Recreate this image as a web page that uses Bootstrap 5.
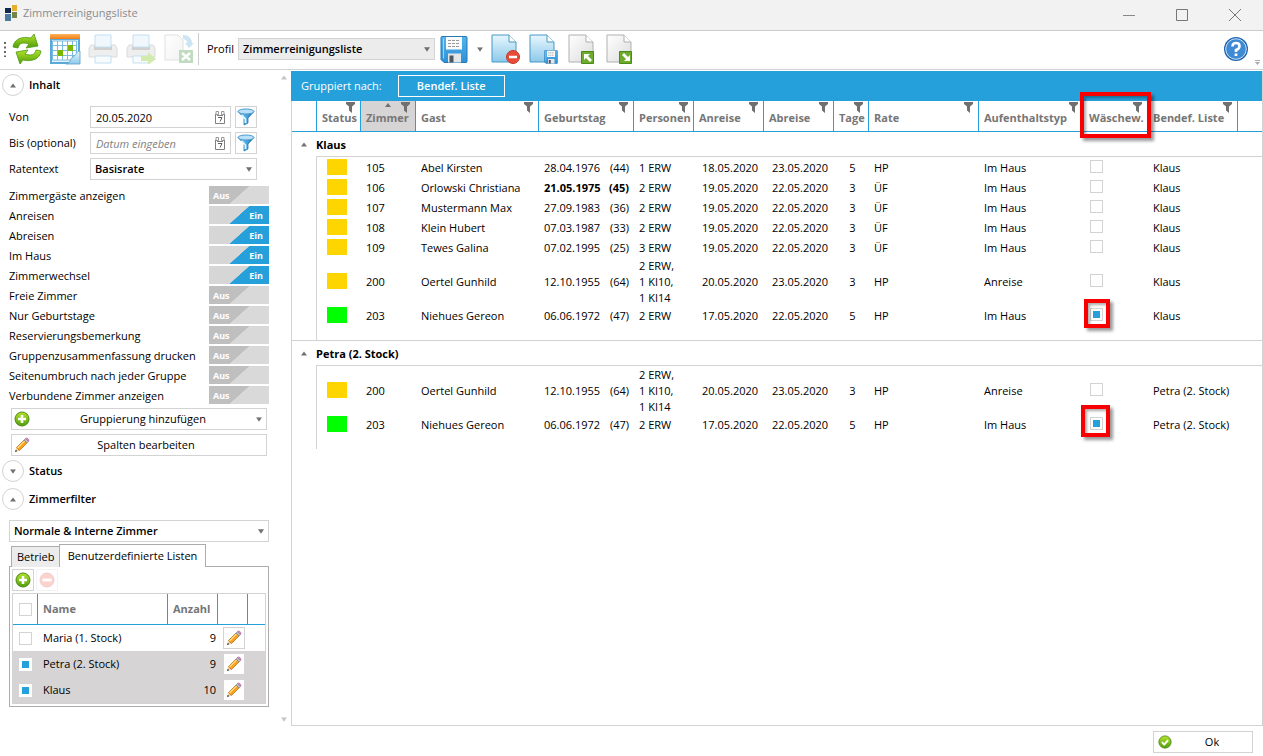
<!DOCTYPE html>
<html lang="de">
<head>
<meta charset="utf-8">
<meta name="viewport" content="width=device-width, initial-scale=1">
<title>Zimmerreinigungsliste</title>
<link href="https://cdn.jsdelivr.net/npm/bootstrap@5.3.0/dist/css/bootstrap.min.css" rel="stylesheet">
<style>
:root{--accent:#26a0da;--line:#d3d3d3;--grey:#767676}
body{font:11px/16px "Open Sans","Noto Sans",sans-serif;color:#000;background:#fff}
button,input,select{font:inherit;color:inherit}
svg{display:block;flex:none}
.semi{font-weight:600}
.title-strip{height:31px;background:#f2f2f2;border-bottom:1px solid #ccc;color:#8c8c8c;padding-left:4px;gap:5px}
.title-strip .win-btn{width:48px;height:28px;border:0;background:none;padding:0}
.title-strip{padding-right:4px}
.tool-strip{height:39px;border-bottom:1px solid var(--line);padding:0 8px 2px 4px;position:relative}
.tool-strip .tool{border:0;background:none;padding:0;width:38px;height:36px;display:flex;align-items:center;justify-content:center}
.tool-strip .tool.slim{width:14px}
.tool-strip .overflow-mark{position:absolute;right:3px;bottom:3px}
.tool.faded{opacity:.35}
.tool-sep{width:1px;height:32px;background:#ccc}
.pick{appearance:none;height:22px;border:1px solid var(--line);border-radius:0;padding:0 20px 0 4px;font-weight:600;background:#fff url("data:image/svg+xml,%3Csvg xmlns='http://www.w3.org/2000/svg' width='6' height='5' viewBox='0 0 7 5'%3E%3Cpath d='M0 0h7L3.500 5z' fill='%23707070'/%3E%3C/svg%3E") no-repeat right 4px center}
.pick.profile{width:197px;background-color:#ececec}
main{padding-top:1px}
.side{width:291px;flex:none;padding:3px 22px 0 9px}
.exp{border:0;background:none;padding:0;height:22px;gap:5px;margin-left:-7px}
.exp .ring{width:22px;height:22px;border:1px solid var(--line);border-radius:50%;display:flex;align-items:center;justify-content:center}
.fields{padding-top:10px}
.form-line{height:22px;margin-bottom:4px;width:248px}
.form-line label{width:81px;flex:none}
.date-box{width:141px;height:22px;border:1px solid var(--line)}
.date-box input{border:0;outline:0;background:none;padding:0 5px;width:118px;height:20px}
.date-box input::placeholder{color:#808080;font-style:italic;opacity:1}
.flat{border:1px solid var(--line);background:#fff;border-radius:0;padding:0;height:22px;display:flex;align-items:center}
.flat.sq{width:22px;justify-content:center}
.opts{padding:2px 0}
.opt{height:20px;white-space:nowrap}
.opt .sw{position:relative;width:60px;height:18px;flex:none;margin-top:-3px}
.opt input{appearance:none;position:absolute;inset:0;margin:0;width:60px;height:18px;background:linear-gradient(138deg,#bfbfbf 50%,#d9d9d9 51%)}
.opt input:checked{background:linear-gradient(138deg,#d6d6d6 50%,var(--accent) 51%)}
.opt b{position:absolute;left:4px;top:2px;font-size:9px;color:#fff}
.opt input:checked + b{left:auto;right:6px}
.cmd{width:256px;margin:0 0 4px 2px;padding:0 4px 0 2px}
.cmd span{flex:1;text-align:center}
.tabs{margin:2px 0 0 2px;height:23px}
.tabs button{border:1px solid #acacac;border-bottom:0;background:#ececec;padding:0 5px;height:21px;border-radius:0;white-space:nowrap;width:49px;text-align:center}
.tabs button.on{background:#fff;width:147px;height:23px;margin-left:-1px;position:relative}
.tab-body{border:1px solid #acacac;width:260px;margin-top:-1px;padding:2px}
.tab-tools{gap:2px}
.filters{padding-top:6px}
.filters .pick{margin-top:10px}
.mini{border:1px solid var(--line);table-layout:fixed;width:100%;border-collapse:separate;border-spacing:0;margin-top:2px}
.mini th{height:31px;border-bottom:1px solid var(--accent);border-right:1px solid var(--accent);color:var(--grey);padding:0 5px}
.mini th:last-child{border-right:0}
.mini td{height:26px;padding:0 5px}
.mini td:nth-child(3){text-align:right;padding-right:2px}
.mini tr.sel td{background:#d6d4d5}
.mini .sel .flat{border-color:#fff;height:20px;width:20px;margin-left:1px}
.tick{appearance:none;display:block;width:13px;height:13px;margin:0;border:1px solid var(--line);background:#fff}
.tick:checked{background:linear-gradient(var(--accent),var(--accent)) center/7px 7px no-repeat #fff}
.mini .tick{margin-left:1px}
.mini .sel .tick{border-color:#fff}
.work{border:1px solid var(--line);border-top:0;margin-bottom:0;min-width:0}
.group-strip{background:var(--accent);color:#fff;height:30px;padding-left:10px;gap:16px;margin-left:-1px}
.group-strip button{border:1px solid #fff;background:none;color:#fff;width:107px;height:22px;padding:0;font-weight:600}
.rooms{table-layout:fixed;width:100%;border-collapse:separate;border-spacing:0}
.rooms thead th{height:31px;position:relative;border-bottom:1px solid var(--accent);border-right:1px solid var(--accent);color:var(--grey);padding:3px 0 0 5px;white-space:nowrap}
.rooms thead th:last-child{border-right:0}
.rooms th.sorted{background:#d6d4d5}
.rooms th .flt{position:absolute;right:5px;top:1px}
.rooms th .up{position:absolute;left:50%;top:2px;margin-left:-3px}
.rooms td{height:20px;padding:0 5px;white-space:nowrap}
.rooms td.c{text-align:center;padding:0 0 0 2px}
.rooms td:first-child{border-right:1px solid var(--line);padding:0}
.rooms .grp th{height:24px;padding-left:9px;padding-top:2px}
.rooms .grp button{border:0;background:none;padding:0;gap:9px;font-weight:700}
.rooms .gap td{height:2px;border-top:1px solid var(--line);line-height:0}
.rooms .gap td:first-child{border-top:0}
.rooms .end td{height:14px}
.rooms .end.ruled td{height:15px;border-bottom:1px solid var(--line)}
.chip{display:block;width:20px;height:16px;background:#ffd500;margin:0 0 2px 5px}
.chip.go{background:#0f0}
.cell-tick{position:relative;width:13px;margin:0 0 3px 1px}
.mark-red{position:absolute;border:4px solid #f80000;box-shadow:3px 3px 3px #0006,inset 2px 2px 3px #0005;pointer-events:none;z-index:2}
.mark-red.head{inset:-9px -4px -7px -4px}
.mark-red.one{inset:-9px -7px -7px -6px}
.mark-red.two{inset:-12px -7px -7px -9px}
.foot{height:30px;padding:5px 10px 0 0}
.foot .flat{width:100px}
</style>
</head>
<body>
<svg width="0" height="0" class="position-absolute" aria-hidden="true">
<defs>
<linearGradient id="gG" x2="0" y2="1"><stop stop-color="#b5e32a"/><stop offset="1" stop-color="#4f9e0a"/></linearGradient>
<linearGradient id="gB" x2="0" y2="1"><stop stop-color="#e8f6fd"/><stop offset="1" stop-color="#8cc9ea"/></linearGradient>
<linearGradient id="gS" x2="0" y2="1"><stop stop-color="#53b5ec"/><stop offset="1" stop-color="#2e8fd6"/></linearGradient>
<linearGradient id="gW" x2="1" y2="1"><stop stop-color="#fff"/><stop offset="1" stop-color="#dcdcdc"/></linearGradient>
<linearGradient id="gO" x2="0" y2="1"><stop stop-color="#ffb45c"/><stop offset="1" stop-color="#f07c14"/></linearGradient>
<linearGradient id="gF" x2="1" y2="0"><stop stop-color="#8fd0f4"/><stop offset=".5" stop-color="#4aa9e0"/><stop offset="1" stop-color="#1b6fae"/></linearGradient>
<symbol id="flt" viewBox="0 0 9 11"><path d="M0 0h9v2L6 4.500V11L3 8.500v-4L0 2z" fill="#707070"/></symbol>
<symbol id="up" viewBox="0 0 6 4"><path d="M3 0l3 4H0z" fill="#707070"/></symbol>
<symbol id="dn" viewBox="0 0 7 5"><path d="M0 0h7L3.500 5z" fill="#707070"/></symbol>
<symbol id="cal" viewBox="0 0 12 13"><path d="M1.500 3v9.500h9V3M3 4.500h6" fill="none" stroke="#808080"/><path d="M2 .5h2.500v3H2zM7.500 .5H10v3H7.500z" fill="#fff" stroke="#808080" stroke-width=".8"/><path d="M4 6.500h4L6 10.500" fill="none" stroke="#606060"/></symbol>
<symbol id="fun" viewBox="0 0 18 18"><path d="M1 3.500l6 6.500v7l4-2v-5l6-6.500z" fill="url(#gF)" stroke="#2a78b0" stroke-width=".8"/><ellipse cx="9" cy="3.500" rx="8" ry="2.500" fill="#b9e0f6" stroke="#4a9cd0"/><path d="M4.500 7l4 4v4" stroke="#e2f4fd" stroke-width="1.800" fill="none"/></symbol>
<symbol id="plus" viewBox="0 0 16 16"><circle cx="8" cy="8" r="7" fill="url(#gG)" stroke="#4b8a12"/><path d="M8 4v8M4 8h8" stroke="#fff" stroke-width="2.600"/></symbol>
<symbol id="minus" viewBox="0 0 16 16"><circle cx="8" cy="8" r="7" fill="#f0503c" stroke="#c03a2c"/><path d="M3.500 8h9" stroke="#fff" stroke-width="2.800"/></symbol>
<symbol id="pen" viewBox="0 0 16 16"><path d="M1 15l1.500-4.500 3 3z" fill="#f3cf9b"/><path d="M1 15l.8-2.300 1.500 1.500z" fill="#333"/><path d="M2.500 10.500L10 3l3 3-7.500 7.500z" fill="#f9a11b" stroke="#b5660c" stroke-width=".7"/><path d="M3.500 11l7.200-7.200" stroke="#ffe08a" stroke-width="1.200"/><path d="M10 3l1.500-1.500 3 3L13 6z" fill="#b9bfc4" stroke="#74797d" stroke-width=".6"/><path d="M11.500 1.500q1-1.200 2.500 0 2 1.500.5 3z" fill="#d98bbd" stroke="#9f6190" stroke-width=".5"/></symbol>
<symbol id="page" viewBox="0 0 26 30"><path d="M1 1h17l7 7v20H1z"/><path d="M18 1v7h7" fill="#fff"/></symbol>
<symbol id="disk" viewBox="0 0 28 28"><path d="M1 2q0-1 1-1h24q1 0 1 1v24q0 1-1 1H4l-3-3z" fill="url(#gS)" stroke="#2878b4"/><path d="M6 1.500h16V14H6z" fill="#fafafa"/><path d="M8 5h12M8 8h12M8 11h12" stroke="#999" stroke-dasharray="3 1"/><path d="M8 18h13v9H8z" fill="#e4e7ea"/><path d="M9.500 20h4v7h-4z" fill="#4d5860"/><path d="M3.500 3v20" stroke="#98d8fa"/></symbol>
<symbol id="print" viewBox="0 0 30 30"><path d="M3 11h24l2 3v9H1v-9z" fill="#d0d0d0" stroke="#999"/><path d="M6 12h18v4H6z" fill="#777"/><path d="M7 1h16v12H7z" fill="#d5edfa" stroke="#5aa5d8"/><path d="M7 22h16v7H7z" fill="#e9f5fc" stroke="#5aa5d8"/></symbol>
</defs></svg>

<div class="min-vh-100 d-flex flex-column">
<header class="title-strip d-flex align-items-center">
  <svg class="mb-1" width="14" height="18" viewBox="0 0 14 18"><path d="M1 4h6v5H1z" fill="#12284a"/><path d="M1 10h6v7H1z" fill="#4b7aa0"/><path d="M8 1h5v6H8z" fill="#e4b02c"/><path d="M8 8h5v6H8z" fill="#748549"/></svg>
  <span class="flex-grow-1 mb-1">Zimmerreinigungsliste</span>
  <button class="win-btn" aria-label="Minimieren"><svg class="mx-auto" width="12" height="12"><path d="M0 6.500h12" stroke="#888"/></svg></button>
  <button class="win-btn" aria-label="Maximieren"><svg class="mx-auto" width="12" height="12"><path d="M.5.5h11v11H.5z" fill="none" stroke="#777"/></svg></button>
  <button class="win-btn" aria-label="Schließen"><svg class="mx-auto" width="12" height="12"><path d="M0 0l12 12M12 0L0 12" stroke="#777"/></svg></button>
</header>

<div class="tool-strip d-flex align-items-center" role="toolbar">
  <svg width="4" height="16"><path d="M1 1v15" stroke="#666" stroke-width="2" stroke-dasharray="2 2.500"/></svg>
  <button class="tool" aria-label="Aktualisieren"><svg width="32" height="32" viewBox="0 0 32 32" fill="url(#gG)" stroke="#4d9a10" stroke-width=".8"><path d="M2 14C3 6 11 3 20 5l3-4 4 12-12 2 3-4C12 9 8 10 7 15z"/><path d="M30 18c-1 8-9 11-18 9l-3 4-4-12 12-2-3 4c6 2 10 1 11-4z"/></svg></button>
  <button class="tool" aria-label="Kalender"><svg width="32" height="32" viewBox="0 0 32 32"><path d="M1 1h30v30H1z" fill="#5ba9d8"/><path d="M1 1h30v5H1z" fill="url(#gO)"/><path d="M3 7h26v22H3z" fill="#e3f2fa"/><path d="M4 8h24v19H4z" fill="#fff"/><path d="M3.500 8v19h24V8zM3 12.500h25M3 17.500h25M3 22.500h25M8.500 8v19M13.500 8v19M18.500 8v19M23.500 8v19" fill="none" stroke="#7dbbe0"/><path d="M9 17h5v6H9zM19 12h5v6h-5z" fill="#7ab800"/><path d="M31 18v13H17c6-2 3-5 7-7s2-5 7-6z" fill="url(#gB)" stroke="#5ba0cc" stroke-width=".8"/></svg></button>
  <button class="tool faded" disabled aria-label="Drucken"><svg width="30" height="30"><use href="#print"/></svg></button>
  <button class="tool faded" disabled aria-label="Direkt drucken"><svg width="30" height="30"><use href="#print"/><path d="M15 22h7v-4l8 7-8 6v-4h-7z" fill="#84c41e"/></svg></button>
  <button class="tool faded" disabled aria-label="Excel-Export"><svg width="30" height="30"><path d="M1 1h13l5 5v20H1z" fill="url(#gW)" stroke="#aaa"/><path d="M19 1c7 0 9 5 9 8h2l-5 5-4-5h2c0-3-2-4-4-4z" fill="#6cb6e4"/><path d="M15 16h14v13H15z" fill="#4c9a4a"/><path d="M18 19l8 7M26 19l-8 7" stroke="#fff" stroke-width="2.500"/></svg></button>
  <i class="tool-sep"></i>
  <label for="profil" class="ms-2 me-1">Profil</label>
  <select id="profil" class="pick profile"><option>Zimmerreinigungsliste</option></select>
  <button class="tool" aria-label="Profil speichern"><svg width="28" height="29" viewBox="0 0 28 28"><use href="#disk"/></svg></button>
  <button class="tool slim" aria-label="Speicheroptionen"><svg width="6" height="5" viewBox="0 0 7 5"><use href="#dn"/></svg></button>
  <button class="tool" aria-label="Profil löschen"><svg width="30" height="31"><g fill="url(#gB)" stroke="#4798c4"><use href="#page" width="26" height="30"/></g><circle cx="22" cy="23" r="6.500" fill="#ea4b38" stroke="#c43a2a"/><path d="M18 23h8" stroke="#fff" stroke-width="2.500"/></svg></button>
  <button class="tool" aria-label="Profil speichern unter"><svg width="30" height="31"><g fill="url(#gB)" stroke="#4798c4"><use href="#page" width="26" height="30"/></g><use href="#disk" x="15" y="16" width="14" height="14"/></svg></button>
  <button class="tool" aria-label="Import"><svg width="28" height="31"><g fill="url(#gW)" stroke="#b0b0b0"><use href="#page" width="26" height="30"/></g><path d="M13.500 17.500h12v12h-12z" fill="#6cab2c" stroke="#4c8a1a"/><path d="M16 20h6l-2 2 4 4-2 2-4-4-2 2z" fill="#fff"/></svg></button>
  <button class="tool" aria-label="Export"><svg width="28" height="31"><g fill="url(#gW)" stroke="#b0b0b0"><use href="#page" width="26" height="30"/></g><path d="M13.500 17.500h12v12h-12z" fill="#6cab2c" stroke="#4c8a1a"/><path d="M24 27h-6l2-2-4-4 2-2 4 4 2-2z" fill="#fff"/></svg></button>
  <button class="tool ms-auto" aria-label="Hilfe"><svg width="26" height="26" viewBox="0 0 26 26"><circle cx="13" cy="13" r="12" fill="#1c64b0"/><circle cx="13" cy="13" r="10.300" fill="#3f8ad4" stroke="#cfe3f6"/><path d="M9.500 10.500q0-3.500 3.500-3.500t3.500 3-3.500 4v2" fill="none" stroke="#fff" stroke-width="2.600"/><path d="M11.600 17.500h2.800V20h-2.800z" fill="#fff"/></svg></button>
  <svg class="overflow-mark" width="5" height="6"><path d="M0 .5h5" stroke="#aaa"/><path d="M0 2h5L2.500 5z" fill="#aaa"/></svg>
</div>

<main class="d-flex flex-grow-1">
<aside class="side position-relative">
  <button class="exp d-flex align-items-center semi"><span class="ring"><svg width="6" height="5"><use href="#up"/></svg></span>Inhalt</button>
  <div class="fields">
  <div class="form-line d-flex align-items-center"><label for="von">Von</label><span class="date-box d-flex align-items-center"><input id="von" type="text" value="20.05.2020"><svg class="ms-auto me-1" width="12" height="13"><use href="#cal"/></svg></span><button class="flat sq ms-auto" aria-label="Filter Von"><svg width="18" height="18"><use href="#fun"/></svg></button></div>
  <div class="form-line d-flex align-items-center"><label for="bis">Bis (optional)</label><span class="date-box d-flex align-items-center"><input id="bis" type="text" placeholder="Datum eingeben"><svg class="ms-auto me-1" width="12" height="13"><use href="#cal"/></svg></span><button class="flat sq ms-auto" aria-label="Filter Bis"><svg width="18" height="18"><use href="#fun"/></svg></button></div>
  <div class="form-line d-flex align-items-center"><label for="rate">Ratentext</label><select id="rate" class="pick flex-grow-1"><option>Basisrate</option></select></div>
  </div>
  <div class="opts">
  <label class="opt d-flex align-items-center justify-content-between">Zimmergäste anzeigen<span class="sw"><input type="checkbox"><b>Aus</b></span></label>
  <label class="opt d-flex align-items-center justify-content-between">Anreisen<span class="sw"><input type="checkbox" checked><b>Ein</b></span></label>
  <label class="opt d-flex align-items-center justify-content-between">Abreisen<span class="sw"><input type="checkbox" checked><b>Ein</b></span></label>
  <label class="opt d-flex align-items-center justify-content-between">Im Haus<span class="sw"><input type="checkbox" checked><b>Ein</b></span></label>
  <label class="opt d-flex align-items-center justify-content-between">Zimmerwechsel<span class="sw"><input type="checkbox" checked><b>Ein</b></span></label>
  <label class="opt d-flex align-items-center justify-content-between">Freie Zimmer<span class="sw"><input type="checkbox"><b>Aus</b></span></label>
  <label class="opt d-flex align-items-center justify-content-between">Nur Geburtstage<span class="sw"><input type="checkbox"><b>Aus</b></span></label>
  <label class="opt d-flex align-items-center justify-content-between">Reservierungsbemerkung<span class="sw"><input type="checkbox"><b>Aus</b></span></label>
  <label class="opt d-flex align-items-center justify-content-between">Gruppenzusammenfassung drucken<span class="sw"><input type="checkbox"><b>Aus</b></span></label>
  <label class="opt d-flex align-items-center justify-content-between">Seitenumbruch nach jeder Gruppe<span class="sw"><input type="checkbox"><b>Aus</b></span></label>
  <label class="opt d-flex align-items-center justify-content-between">Verbundene Zimmer anzeigen<span class="sw"><input type="checkbox"><b>Aus</b></span></label>
  </div>
  <button class="flat cmd"><svg width="16" height="16"><use href="#plus"/></svg><span>Gruppierung hinzufügen</span><svg width="6" height="5" viewBox="0 0 7 5"><use href="#dn"/></svg></button>
  <button class="flat cmd"><svg width="16" height="16"><use href="#pen"/></svg><span>Spalten bearbeiten</span></button>
  <button class="exp d-flex align-items-center semi mt-1"><span class="ring"><svg width="6" height="5" viewBox="0 0 7 5"><use href="#dn"/></svg></span>Status</button>
  <div class="filters">
  <button class="exp d-flex align-items-center semi"><span class="ring"><svg width="6" height="5"><use href="#up"/></svg></span>Zimmerfilter</button>
  <select class="pick w-100 d-block" aria-label="Zimmerfilter"><option>Normale &amp; Interne Zimmer</option></select>
  <div class="tabs d-flex align-items-end" role="tablist"><button role="tab">Betrieb</button><button role="tab" class="on">Benutzerdefinierte Listen</button></div>
  <div class="tab-body">
    <div class="tab-tools d-flex"><button class="flat sq" aria-label="Hinzufügen"><svg width="16" height="16"><use href="#plus"/></svg></button><button class="flat sq opacity-25" disabled aria-label="Entfernen"><svg width="16" height="16"><use href="#minus"/></svg></button></div>
    <table class="mini">
      <colgroup><col style="width:25px"><col><col style="width:50px"><col style="width:30px"><col style="width:17px"></colgroup>
      <thead><tr><th><input class="tick" type="checkbox" aria-label="Alle"></th><th>Name</th><th>Anzahl</th><th></th><th></th></tr></thead>
      <tbody>
      <tr><td><input class="tick" type="checkbox" aria-label="Maria"></td><td>Maria (1. Stock)</td><td>9</td><td><button class="flat sq" aria-label="Bearbeiten"><svg width="16" height="16"><use href="#pen"/></svg></button></td><td></td></tr>
      <tr class="sel"><td><input class="tick" type="checkbox" checked aria-label="Petra"></td><td>Petra (2. Stock)</td><td>9</td><td><button class="flat sq" aria-label="Bearbeiten"><svg width="16" height="16"><use href="#pen"/></svg></button></td><td></td></tr>
      <tr class="sel"><td><input class="tick" type="checkbox" checked aria-label="Klaus"></td><td>Klaus</td><td>10</td><td><button class="flat sq" aria-label="Bearbeiten"><svg width="16" height="16"><use href="#pen"/></svg></button></td><td></td></tr>
      </tbody>
    </table>
  </div>
  </div>
  <svg class="position-absolute end-0 top-0 mt-1 me-1" width="6" height="5" opacity=".4"><use href="#up"/></svg>
  <svg class="position-absolute end-0 bottom-0 mb-1 me-1" width="6" height="5" viewBox="0 0 7 5" opacity=".4"><use href="#dn"/></svg>
</aside>

<section class="work flex-grow-1">
  <div class="group-strip d-flex align-items-center"><span>Gruppiert nach:</span><button>Bendef. Liste</button></div>
  <table class="rooms">
    <colgroup><col style="width:25px"><col style="width:44px"><col style="width:55px"><col style="width:123px"><col style="width:95px"><col style="width:60px"><col style="width:70px"><col style="width:70px"><col style="width:35px"><col style="width:110px"><col style="width:105px"><col style="width:64px"><col style="width:90px"><col></colgroup>
    <thead><tr><th></th>
    <th>Status<svg class="flt" width="9" height="11"><use href="#flt"/></svg></th>
    <th class="sorted">Zimmer<svg class="up" width="6" height="4"><use href="#up"/></svg><svg class="flt" width="9" height="11"><use href="#flt"/></svg></th>
    <th>Gast<svg class="flt" width="9" height="11"><use href="#flt"/></svg></th>
    <th>Geburtstag<svg class="flt" width="9" height="11"><use href="#flt"/></svg></th>
    <th>Personen<svg class="flt" width="9" height="11"><use href="#flt"/></svg></th>
    <th>Anreise<svg class="flt" width="9" height="11"><use href="#flt"/></svg></th>
    <th>Abreise<svg class="flt" width="9" height="11"><use href="#flt"/></svg></th>
    <th>Tage<svg class="flt" width="9" height="11"><use href="#flt"/></svg></th>
    <th>Rate<svg class="flt" width="9" height="11"><use href="#flt"/></svg></th>
    <th>Aufenthaltstyp<svg class="flt" width="9" height="11"><use href="#flt"/></svg></th>
    <th>Wäschew.<svg class="flt" width="9" height="11"><use href="#flt"/></svg><span class="mark-red head"></span></th>
    <th>Bendef. Liste<svg class="flt" width="9" height="11"><use href="#flt"/></svg></th><th></th></tr></thead>
    <tbody>
    <tr class="grp"><th colspan="14"><button class="d-flex align-items-center"><svg width="6" height="5"><use href="#up"/></svg>Klaus</button></th></tr>
    <tr class="gap"><td></td><td colspan="13"></td></tr>
    <tr><td></td><td><i class="chip"></i></td><td>105</td><td>Abel Kirsten</td><td><div class="d-flex justify-content-between"><span>28.04.1976</span><span>(44)</span></div></td><td>1 ERW</td><td class="c">18.05.2020</td><td class="c">23.05.2020</td><td class="c">5</td><td>HP</td><td>Im Haus</td><td><div class="cell-tick"><input class="tick" type="checkbox" aria-label="Wäschewechsel 105"></div></td><td>Klaus</td><td></td></tr>
    <tr><td></td><td><i class="chip"></i></td><td>106</td><td>Orlowski Christiana</td><td class="fw-bold"><div class="d-flex justify-content-between"><span>21.05.1975</span><span>(45)</span></div></td><td>2 ERW</td><td class="c">19.05.2020</td><td class="c">22.05.2020</td><td class="c">3</td><td>ÜF</td><td>Im Haus</td><td><div class="cell-tick"><input class="tick" type="checkbox" aria-label="Wäschewechsel 106"></div></td><td>Klaus</td><td></td></tr>
    <tr><td></td><td><i class="chip"></i></td><td>107</td><td>Mustermann Max</td><td><div class="d-flex justify-content-between"><span>27.09.1983</span><span>(36)</span></div></td><td>2 ERW</td><td class="c">19.05.2020</td><td class="c">22.05.2020</td><td class="c">3</td><td>ÜF</td><td>Im Haus</td><td><div class="cell-tick"><input class="tick" type="checkbox" aria-label="Wäschewechsel 107"></div></td><td>Klaus</td><td></td></tr>
    <tr><td></td><td><i class="chip"></i></td><td>108</td><td>Klein Hubert</td><td><div class="d-flex justify-content-between"><span>07.03.1987</span><span>(33)</span></div></td><td>2 ERW</td><td class="c">19.05.2020</td><td class="c">22.05.2020</td><td class="c">3</td><td>ÜF</td><td>Im Haus</td><td><div class="cell-tick"><input class="tick" type="checkbox" aria-label="Wäschewechsel 108"></div></td><td>Klaus</td><td></td></tr>
    <tr><td></td><td><i class="chip"></i></td><td>109</td><td>Tewes Galina</td><td><div class="d-flex justify-content-between"><span>07.02.1995</span><span>(25)</span></div></td><td>3 ERW</td><td class="c">19.05.2020</td><td class="c">22.05.2020</td><td class="c">3</td><td>ÜF</td><td>Im Haus</td><td><div class="cell-tick"><input class="tick" type="checkbox" aria-label="Wäschewechsel 109"></div></td><td>Klaus</td><td></td></tr>
    <tr><td></td><td><i class="chip"></i></td><td>200</td><td>Oertel Gunhild</td><td><div class="d-flex justify-content-between"><span>12.10.1955</span><span>(64)</span></div></td><td>2 ERW,<br>1 KI10,<br>1 KI14</td><td class="c">20.05.2020</td><td class="c">23.05.2020</td><td class="c">3</td><td>HP</td><td>Anreise</td><td><div class="cell-tick"><input class="tick" type="checkbox" aria-label="Wäschewechsel 200"></div></td><td>Klaus</td><td></td></tr>
    <tr><td></td><td><i class="chip go"></i></td><td>203</td><td>Niehues Gereon</td><td><div class="d-flex justify-content-between"><span>06.06.1972</span><span>(47)</span></div></td><td>2 ERW</td><td class="c">17.05.2020</td><td class="c">22.05.2020</td><td class="c">5</td><td>HP</td><td>Im Haus</td><td><div class="cell-tick"><input class="tick" type="checkbox" checked aria-label="Wäschewechsel 203"><span class="mark-red one"></span></div></td><td>Klaus</td><td></td></tr>
    <tr class="end ruled"><td></td><td colspan="13"></td></tr>
    </tbody>
    <tbody>
    <tr class="grp"><th colspan="14"><button class="d-flex align-items-center"><svg width="6" height="5"><use href="#up"/></svg>Petra (2. Stock)</button></th></tr>
    <tr class="gap"><td></td><td colspan="13"></td></tr>
    <tr><td></td><td><i class="chip"></i></td><td>200</td><td>Oertel Gunhild</td><td><div class="d-flex justify-content-between"><span>12.10.1955</span><span>(64)</span></div></td><td>2 ERW,<br>1 KI10,<br>1 KI14</td><td class="c">20.05.2020</td><td class="c">23.05.2020</td><td class="c">3</td><td>HP</td><td>Anreise</td><td><div class="cell-tick"><input class="tick" type="checkbox" aria-label="Wäschewechsel 200 Petra"></div></td><td>Petra (2. Stock)</td><td></td></tr>
    <tr><td></td><td><i class="chip go"></i></td><td>203</td><td>Niehues Gereon</td><td><div class="d-flex justify-content-between"><span>06.06.1972</span><span>(47)</span></div></td><td>2 ERW</td><td class="c">17.05.2020</td><td class="c">22.05.2020</td><td class="c">5</td><td>HP</td><td>Im Haus</td><td><div class="cell-tick"><input class="tick" type="checkbox" checked aria-label="Wäschewechsel 203 Petra"><span class="mark-red two"></span></div></td><td>Petra (2. Stock)</td><td></td></tr>
    <tr class="end"><td></td><td colspan="13"></td></tr>
    </tbody>
  </table>
</section>
</main>
<footer class="foot d-flex justify-content-end"><button class="flat"><svg class="ms-1" width="14" height="14" viewBox="0 0 16 16"><circle cx="8" cy="8" r="7" fill="url(#gG)" stroke="#4b8a12"/><path d="M4.500 8l2.500 3 4.500-5" fill="none" stroke="#fff" stroke-width="2.200"/></svg><span class="flex-grow-1 text-center">Ok</span></button></footer>
</div>
<script src="https://cdn.jsdelivr.net/npm/bootstrap@5.3.0/dist/js/bootstrap.bundle.min.js"></script>
</body>
</html>
